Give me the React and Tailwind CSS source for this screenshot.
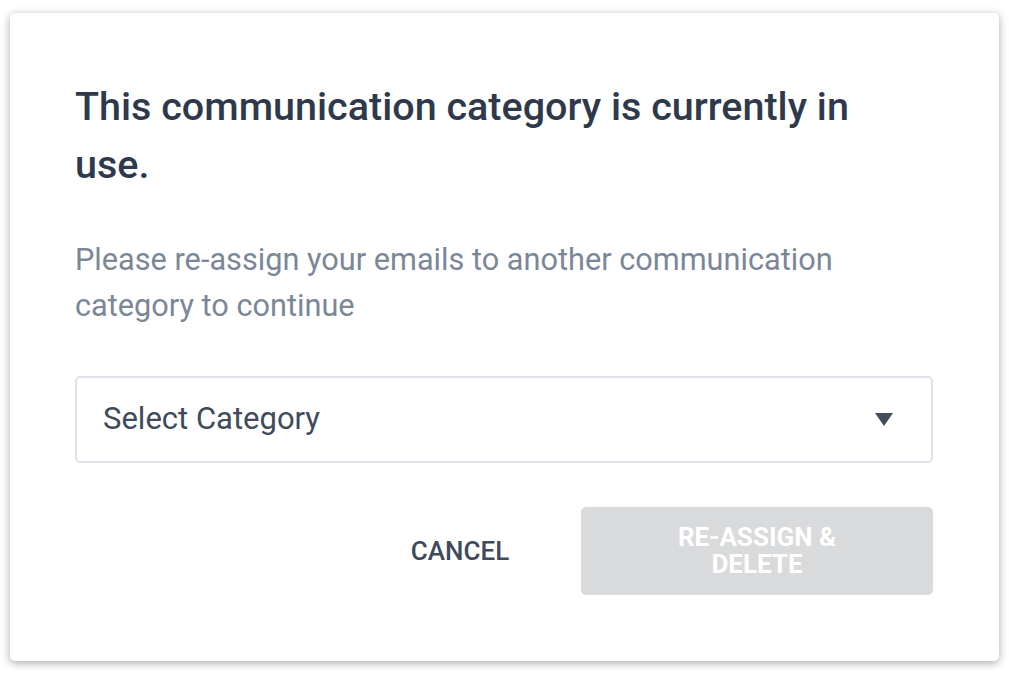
import { useState } from 'react'

export default function App() {
  const [category] = useState('Select Category')

  return (
    <div className="w-[1009px] h-[674px] bg-white pt-[13px] pl-[10px]" style={{ fontFamily: 'Roboto, "Liberation Sans", sans-serif' }}>
      <div className="w-[989px] h-[648px] bg-white rounded-[5px] shadow-[0_2px_8px_rgba(0,0,0,0.35)] pl-[65px] pr-[66px] pt-[65px]">
        {/* Heading */}
        <h2 className="max-w-[800px] text-[39.5px] leading-[58px] font-medium text-[#2e3a4b]">
          This communication category is currently in use.
        </h2>

        <p className="mt-[43px] text-[30.7px] leading-[46px] text-[#7b8797]">
          Please re-assign your emails to another communication category to continue
        </p>

        {/* Select */}
        <div className="mt-[47px] h-[87px] border-2 border-[#dfe4ea] rounded-[5px] flex items-center justify-between pl-[26px] pr-[38px]">
          <span className="text-[31px] text-[#3f4a5a]">{category}</span>
          <svg width="18" height="13" viewBox="0 0 18 13">
            <path d="M0 0 H18 L9 13 Z" fill="#434d5b" />
          </svg>
        </div>

        {/* Actions */}
        <div className="mt-[44px] flex justify-end items-center">
          <button className="w-[242px] h-[87px] text-[26px] font-medium text-[#3e4a5b] uppercase">
            Cancel
          </button>
          <button className="w-[352px] h-[88px] rounded-[5px] bg-[#d9dadc] text-white text-[26px] leading-[27px] font-bold uppercase px-[80px]">
            Re-assign &amp; Delete
          </button>
        </div>
      </div>
    </div>
  )
}
